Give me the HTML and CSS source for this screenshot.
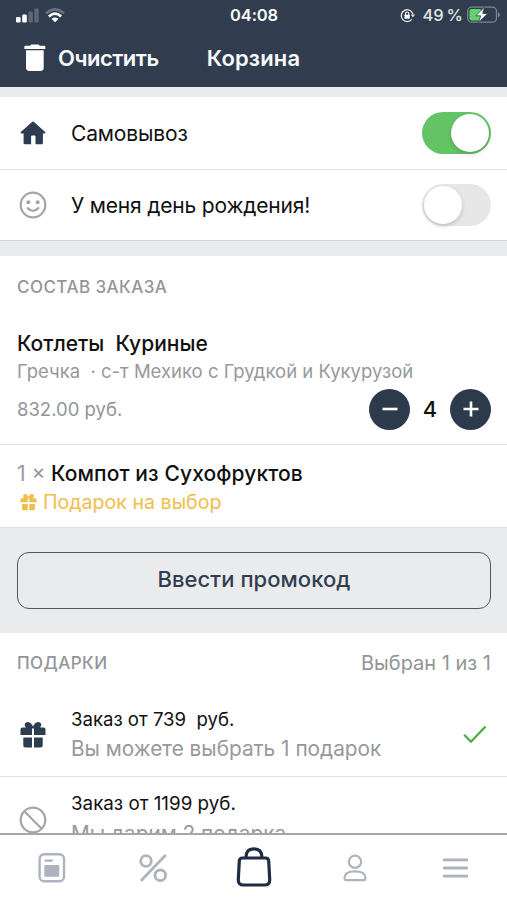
FILE: index.html
```html
<!DOCTYPE html>
<html lang="ru">
<head>
<meta charset="utf-8">
<title>Корзина</title>
<link rel="stylesheet" href="styles.css">
</head>
<body>
<div class="app">
  <header class="header">
    <div class="status">
      <div class="status-left">
        <svg width="23" height="15" viewBox="0 0 23 15"><rect x="0" y="9" width="4.6" height="5.5" rx="1.2" fill="#fff"/><rect x="6.2" y="6.5" width="4.6" height="8" rx="1.2" fill="#fff"/><rect x="12.4" y="3.5" width="4.4" height="11" rx="1.2" fill="#5d6876"/><rect x="18.3" y="0.5" width="4.4" height="14" rx="1.2" fill="#5d6876"/></svg>
        <svg width="20" height="15" viewBox="0 0 20 15" fill="none"><path d="M1 5.2Q10-2.6 19 5.2" stroke="#667180" stroke-width="2.6"/><path d="M3.9 8.4Q10 3 16.1 8.4" stroke="#fff" stroke-width="2.7"/><path d="M6.5 10.8Q10 8 13.500 10.800L10 14.300Z" fill="#fff"/></svg>
      </div>
      <div class="clock">04:08</div>
      <div class="status-right">
        <svg width="15" height="15" viewBox="0 0 15 15" fill="none"><path d="M11.800 11.300A5.900 5.900 0 1 1 12.900 6.200" stroke="#e8ebee" stroke-width="1.300"/><path d="M10.800 6.500H15L12.900 9.500Z" fill="#e8ebee"/><rect x="4.500" y="6.700" width="5.200" height="4" rx=".6" fill="#fff"/><path d="M5.500 7V5.600a1.600 1.600 0 0 1 3.200 0V7" stroke="#fff" stroke-width="1.100"/></svg>
        <span class="percent">49 %</span>
        <svg class="battery" width="33" height="18" viewBox="0 0 33 18"><rect x=".7" y="1.200" width="28.800" height="15" rx="4" fill="none" stroke="#7d8691" stroke-width="1.300"/><rect x="2.500" y="3" width="12" height="11.500" rx="2" fill="#62d566"/><path d="M31 6.200Q33 7 33 8.700T31 11.200Z" fill="#7d8691"/><path d="M17.500 1 8.700 9.800H13.700L11.500 16.500 20.800 7.500H15.700Z" fill="#fff" stroke="#313d4e" stroke-width=".8"/></svg>
      </div>
    </div>
    <div class="navbar">
      <svg class="trash" width="22" height="28" viewBox="0 0 22 28" fill="#fff"><path d="M1.200 1.800H6L7.200.5H14.500L15.700 1.800H20.500Q21.300 1.800 21.300 2.600V4.900H.4V2.600Q.4 1.800 1.200 1.800Z"/><path d="M2 6.300H19.700V23.500Q19.700 27 16.200 27H5.500Q2 27 2 23.500Z"/></svg>
      <span class="clear">Очистить</span>
      <h1 class="title">Корзина</h1>
    </div>
  </header>

  <main class="content">
    <section class="options">
      <div class="option">
        <div class="icon"><svg width="26" height="24" viewBox="0 0 26 24"><path d="M12 .9Q13 0 14 .9L25.200 11Q26 12.400 24.500 12.500H22.900V22Q22.900 23.300 21.600 23.300H15.500V15.500Q15.500 14.600 14.600 14.600H12Q11.100 14.600 11.100 15.500V23.300H4.900Q3.600 23.300 3.600 22V12.500H1.500Q0 12.400.8 11Z" fill="#2d3c50"/></svg></div>
        <span class="option-name pickup">Самовывоз</span>
        <div class="switch on"><i></i></div>
      </div>
      <div class="option second">
        <div class="icon"><svg width="28" height="28" viewBox="0 0 28 28"><circle cx="14" cy="14" r="12.300" fill="none" stroke="#a3a5a7" stroke-width="2.200"/><circle cx="9.300" cy="11.300" r="2" fill="#a3a5a7"/><circle cx="18.700" cy="11.300" r="2" fill="#a3a5a7"/><path d="M8.600 17.100Q14 22.500 19.400 17.100" fill="none" stroke="#a3a5a7" stroke-width="2.200" stroke-linecap="round"/></svg></div>
        <span class="option-name birthday">У меня день рождения!</span>
        <div class="switch"><i></i></div>
      </div>
    </section>

    <section class="order">
      <h2 class="caption order-caption">СОСТАВ ЗАКАЗА</h2>
      <div class="dish">
        <div class="dish-name">Котлеты&nbsp; Куриные</div>
        <div class="dish-info">Гречка&nbsp; · с-т Мехико с Грудкой и Кукурузой</div>
        <div class="dish-bottom">
          <span class="price">832.00 руб.</span>
          <div class="stepper">
            <button class="round"><svg width="16" height="16" viewBox="0 0 16 16"><path d="M.5 8h15" stroke="#fff" stroke-width="2.600"/></svg></button>
            <span class="count">4</span>
            <button class="round"><svg width="16" height="16" viewBox="0 0 16 16"><path d="M.5 8h15M8 .5v15" stroke="#fff" stroke-width="2.600"/></svg></button>
          </div>
        </div>
      </div>
      <div class="bonus">
        <div class="bonus-line"><span class="qty">1 ×</span><span class="bonus-name">Компот из Сухофруктов</span></div>
        <div class="bonus-gift">
          <svg width="17" height="18" viewBox="0 0 26 28" fill="#f0be4b"><path d="M2.500 8H6C3.500 5 5 1.500 8 1.500 11 1.500 12.200 4.500 13 6.500 13.800 4.500 15 1.500 18 1.500 21 1.500 22.500 5 20 8H23.500Q25.500 8 25.500 10V14.500H14.200V8.500H11.800V14.500H.5V10Q.5 8 2.500 8Z"/><path d="M3 17H11.800V27H5Q3 27 3 25ZM14.200 17H23V25Q23 27 21 27H14.200Z"/></svg>
          <span class="gift-label">Подарок на выбор</span>
        </div>
      </div>
    </section>

    <div class="promo"><button class="promo-button"><span>Ввести промокод</span></button></div>

    <section class="gifts">
      <div class="gifts-head"><h2 class="caption gifts-caption">ПОДАРКИ</h2><span class="chosen">Выбран 1 из 1</span></div>
      <div class="gift">
        <div class="icon"><svg width="26" height="28" viewBox="0 0 26 28" fill="#2d3c50"><path d="M2.500 7.500H6C3.500 5 5 2 8 2 10.500 2 12 4.500 13 6.500 14 4.500 15.500 2 18 2 21 2 22.500 5 20 7.500H23.500Q25.500 7.500 25.500 9.500V15H14V8.500H12V15H.5V9.500Q.5 7.500 2.500 7.500Z"/><path d="M3.300 17.600H12V27.500H5.300Q3.300 27.500 3.300 25.500ZM14 17.600H22.700V25.500Q22.700 27.500 20.700 27.500H14Z"/></svg></div>
        <div class="gift-text"><div class="gift-title">Заказ от 739&nbsp; руб.</div><div class="gift-note">Вы можете выбрать 1 подарок</div></div>
        <svg class="check" width="24" height="19" viewBox="0 0 24 19"><path d="M1.200 9.800 8 16.700 22.500 1.500" fill="none" stroke="#4eaa47" stroke-width="2.300"/></svg>
      </div>
      <div class="gift last">
        <div class="icon"><svg width="28" height="28" viewBox="0 0 28 28" fill="none" stroke="#a3a5a7" stroke-width="2.200"><circle cx="14" cy="14" r="12.300"/><path d="M5.300 5.300 22.700 22.700"/></svg></div>
        <div class="gift-text"><div class="gift-title">Заказ от 1199 руб.</div><div class="gift-note">Мы дарим 2 подарка</div></div>
      </div>
    </section>
  </main>

  <nav class="tabs">
    <a><svg width="28" height="30" viewBox="0 0 28 30"><rect x="1.600" y="1.300" width="24.400" height="27" rx="4.500" fill="none" stroke="#aeb3bf" stroke-width="2.400"/><path d="M7.500 7.600h6.500" stroke="#aeb3bf" stroke-width="2.200" stroke-linecap="round"/><rect x="6.300" y="12" width="15" height="11.800" rx="1" fill="#aeb3bf"/></svg></a>
    <a><svg width="30" height="30" viewBox="0 0 30 30" fill="none" stroke="#afb3bb" stroke-width="2.800"><circle cx="8" cy="8" r="5.300"/><circle cx="22.300" cy="22.300" r="5.300"/><path d="M3.700 27 27 2.700" stroke-linecap="round"/></svg></a>
    <a><svg class="bag" width="36" height="40" viewBox="0 0 36 40" fill="none" stroke="#1f2d44" stroke-width="3.200"><path d="M6.500 11H29.500Q32.500 11 32.700 14L33.700 32.500Q34 38 28.500 38H7.500Q2 38 2.300 32.500L3.300 14Q3.500 11 6.500 11Z"/><path d="M10 10.500C10 4.500 12.500 1.800 18 1.800S26 4.500 26 10.500"/></svg></a>
    <a><svg width="24" height="28" viewBox="0 0 24 28" fill="none" stroke="#afb3bb" stroke-width="2.200"><circle cx="12" cy="7.800" r="6.100"/><path d="M3.200 26.100Q1.500 26.100 1.500 23.700C1.500 19.300 6 17.300 12 17.300S22.500 19.300 22.500 23.700Q22.500 26.100 20.800 26.100Z"/></svg></a>
    <a><svg width="25" height="22" viewBox="0 0 25 22"><path d="M1.200 2.800H23.800M1.200 11H23.800M1.200 19.200H23.800" stroke="#aeb1ba" stroke-width="2.800" stroke-linecap="round"/></svg></a>
  </nav>
</div>
</body>
</html>
```
FILE: styles.css
```css
* { box-sizing: border-box; }
body { margin: 0; background: #fff; font-family: Inter, "Liberation Sans", sans-serif; color: #111; }
h1, h2 { margin: 0; }
button { padding: 0; font: inherit; }
svg { display: block; flex: none; }
span, .dish-name, .dish-info, .gift-title, .gift-note, h1, h2 { white-space: nowrap; }
.app { width: 507px; height: 900px; display: flex; flex-direction: column; overflow: hidden; }

.header { height: 87px; flex: none; background: #313d4e; color: #f7f9fa; }
.status { height: 30px; display: grid; grid-template-columns: 1fr auto 1fr; align-items: center; padding: 0 7px 0 16px; }
.status-left { display: flex; gap: 6px; }
.clock { font-size: 16.5px; font-weight: 600; line-height: 30px; letter-spacing: -.1px; margin-right: 9px; }
.status { grid-template-columns: 214px auto 1fr; }
.status-right { display: flex; align-items: center; justify-content: flex-end; }
.percent { font-size: 16.5px; font-weight: 500; margin: 0 4px 0 7px; color: #e2e5e8; word-spacing: -1.5px; }
.navbar { height: 57px; display: flex; align-items: center; padding: 0 0 1px 24px; }
.clear { font-size: 22px; font-weight: 600; margin-left: 12px; letter-spacing: -.5px; }
.title { font-size: 22px; font-weight: 600; margin-left: 48px; letter-spacing: .15px; }

.content { height: 746px; flex: none; overflow: hidden; background: #e9ebed; padding-top: 10px; }
.options { background: #fff; border-bottom: 1px solid #d4d6d8; height: 144px; }
.option { height: 72px; display: flex; align-items: center; padding: 0 16px 0 18px; }
.option.second { border-top: 1px solid #dfe1e3; padding-bottom: 1px; }
.icon { width: 30px; display: flex; justify-content: center; flex: none; }
.option-name { font-size: 21px; margin-left: 23px; }
.pickup { letter-spacing: -.15px; }
.birthday { letter-spacing: -.18px; }
.switch { margin-left: auto; width: 69px; height: 42px; border-radius: 21px; background: #e7e7e7; padding: 2px; display: flex; }
.switch i { width: 38px; height: 38px; border-radius: 50%; background: #fff; box-shadow: 0 2px 4px rgba(0,0,0,.18); }
.switch.on { background: #63c466; justify-content: flex-end; }

.order { margin-top: 15px; background: #fff; border-bottom: 1px solid #dcdee0; height: 272px; }
.caption { font-size: 17px; font-weight: 500; color: #929599; line-height: 20px; letter-spacing: .45px; }
.order-caption { padding: 21px 0 0 17px; }
.dish { height: 148px; padding: 32px 16px 0 17px; border-bottom: 1px solid #dfe1e3; }
.dish-name { font-size: 21px; font-weight: 500; line-height: 30px; }
.dish-info { font-size: 18.5px; line-height: 24px; color: #96999c; }
.dish-bottom { display: flex; justify-content: space-between; align-items: center; height: 52px; }
.price { font-size: 18.5px; color: #929598; }
.stepper { display: flex; align-items: center; }
.round { width: 41px; height: 41px; border: 0; border-radius: 50%; background: #2d3a4b; display: flex; align-items: center; justify-content: center; }
.count { width: 40px; text-align: center; font-size: 22px; font-weight: 500; }
.bonus { padding: 14px 0 0 17px; }
.bonus-line { height: 30px; line-height: 30px; font-size: 21px; display: flex; }
.qty { color: #96999c; width: 34px; }
.bonus-name { font-weight: 500; letter-spacing: .1px; }
.bonus-gift { display: flex; align-items: center; color: #f0be4b; gap: 6px; height: 26px; margin-left: 3px; }
.gift-label { font-size: 19.6px; }

.promo { height: 105px; padding: 24px 16px 24px 17px; }
.promo-button { width: 100%; height: 57px; padding-bottom: 3px; border: 1.5px solid #505765; border-radius: 12px; background: transparent; color: #313d51; font-size: 22px; font-weight: 500; letter-spacing: .05px; }

.gifts { background: #fff; height: 220px; }
.gifts-head { height: 59px; display: flex; justify-content: space-between; align-items: center; padding: 0 16px 0 17px; }
.chosen { color: #929598; font-size: 20px; }
.gift { height: 85px; display: flex; align-items: center; padding: 0 20px 0 18px; border-bottom: 1px solid #dfe1e3; }
.gift-text { margin-left: 23px; padding-bottom: 2px; }
.gift-title { font-size: 18.6px; line-height: 30px; }
.gift-note { font-size: 20.8px; line-height: 29px; color: #96999c; }
.check { margin-left: auto; }
.gift.last { border: 0; }
.last .gift-title { font-size: 18.8px; }

.tabs { height: 67px; flex: none; border-top: 2px solid #a6a6a6; background: #fff; display: grid; grid-template-columns: repeat(5, 101px); justify-content: center; align-items: center; }
.tabs a { display: flex; justify-content: center; }
.bag { margin-bottom: 2px; }
```
